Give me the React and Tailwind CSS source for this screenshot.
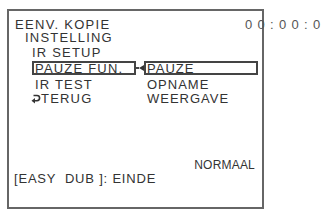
import React from "react";

function ReturnArrow() {
  return (
    <svg width="10" height="11" viewBox="0 0 10 11" className="shrink-0">
      <path d="M2.5 1.5 H6 A2.6 2.6 0 0 1 6 6.7 H3.5" fill="none" stroke="#333" strokeWidth="1.6" />
      <path d="M0.5 6.7 L4 3.9 L4 9.5 Z" fill="#333" />
    </svg>
  );
}

export default function App() {
  const font = { fontFamily: '"Liberation Sans", Arial, sans-serif' };
  return (
    <div className="w-[323px] h-[210px] bg-white relative overflow-hidden text-[#333]" style={font}>
      <div className="absolute left-[7px] top-[9px] w-[257px] h-[200px] border-2 border-[#666] flex flex-col">
        <div className="h-[7px]" />
        <div className="h-[13px] pl-[6px] text-[13px] leading-[14px] tracking-[1.3px] whitespace-nowrap">EENV. KOPIE</div>
        <div className="h-[15px] pl-[16px] text-[13px] leading-[14px] tracking-[1.2px] whitespace-nowrap">INSTELLING</div>
        <div className="h-[15px] pl-[23px] text-[13px] leading-[14px] tracking-[1.2px] whitespace-nowrap">IR SETUP</div>
        <div className="h-[17px] pl-[23px] flex items-start">
          <div className="w-[104px] h-[14px] border-2 border-[#444] pl-[1px] text-[13px] leading-[11px] tracking-[1.2px] whitespace-nowrap">PAUZE FUN.</div>
          <div className="w-[8px] h-[14px] flex items-center">
            <div className="w-[3px] h-[2px] bg-[#444]" />
            <div className="w-0 h-0 border-y-[3.5px] border-y-transparent border-r-[5px] border-r-[#333]" />
          </div>
          <div className="w-[114px] h-[14px] border-2 border-[#444] pl-[1px] text-[13px] leading-[11px] tracking-[1px] whitespace-nowrap">PAUZE</div>
        </div>
        <div className="h-[14px] flex text-[13px] leading-[14px] whitespace-nowrap">
          <div className="w-[138px] pl-[26px] tracking-[1.2px]">IR TEST</div>
          <div className="tracking-[1px]">OPNAME</div>
        </div>
        <div className="h-[14px] flex text-[13px] leading-[14px] whitespace-nowrap">
          <div className="w-[138px] pl-[22px] tracking-[1.2px] flex items-center gap-[0px]">
            <ReturnArrow />
            <span>TERUG</span>
          </div>
          <div className="tracking-[1px]">WEERGAVE</div>
        </div>
        <div className="h-[52px]" />
        <div className="h-[14px] flex justify-end pr-[7px] text-[12px] leading-[14px] tracking-[0.2px] whitespace-nowrap">NORMAAL</div>
        <div className="h-[15px] pl-[5px] text-[13px] leading-[14px] tracking-[0.8px] whitespace-pre">[EASY  DUB ]: EINDE</div>
      </div>
      <div className="absolute left-[245px] top-[18px] text-[13px] leading-[14px] tracking-[5.3px] text-[#555] whitespace-nowrap">00:00:0</div>
    </div>
  );
}
